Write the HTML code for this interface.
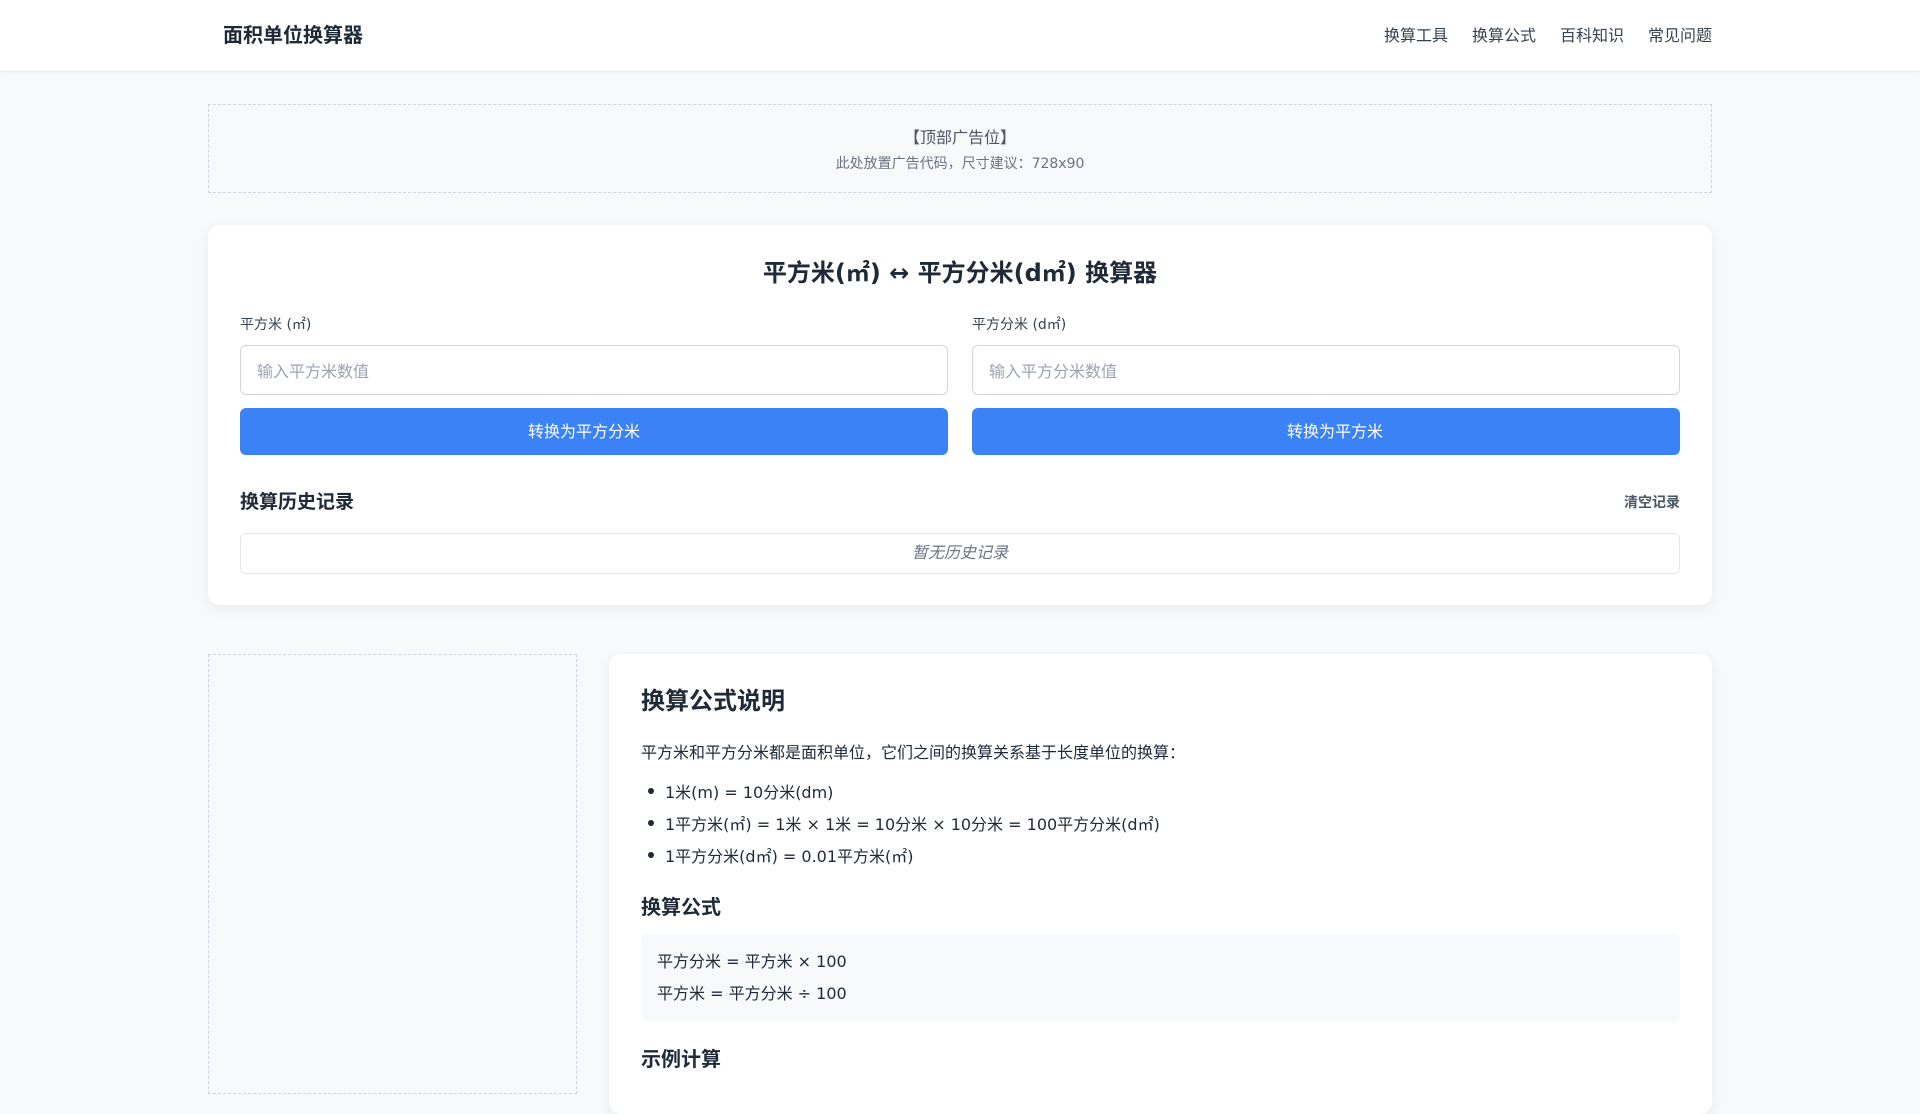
<!DOCTYPE html>
<html><head><meta charset="utf-8"><style>
*{box-sizing:border-box;margin:0;padding:0}
body{width:1920px;height:1080px;overflow:hidden;background:#f8f9fb;font-family:"DejaVu Sans","Noto Sans CJK SC",sans-serif;color:#1f2937}
header{height:72px;background:#fff;border-bottom:1px solid #eceef1;box-shadow:0 1px 3px rgba(0,0,0,.04);position:relative}
.logo{position:absolute;left:223px;top:19px;font-size:20px;font-weight:bold;color:#1f2937}
nav{position:absolute;right:208px;top:22px;font-size:16px;color:#374151}
nav span{margin-left:24px}
.ad{position:absolute;left:208px;top:104px;width:1504px;height:89px;border:1px dashed #cfd5dd;text-align:center;color:#4b5563}
.ad .a{font-size:16px;margin-top:19px}
.ad .b{font-size:14px;margin-top:5px;color:#6b7280}
.card{position:absolute;background:#fff;border-radius:12px;box-shadow:0 4px 14px rgba(0,0,0,.06)}
.c1{left:208px;top:225px;width:1504px;height:380px}
h1{position:absolute;top:28px;left:0;right:0;text-align:center;font-size:24px;font-weight:bold}
.lab{position:absolute;top:89px;font-size:14px;color:#374151}
.inp{position:absolute;top:120px;width:708px;height:50px;border:1px solid #d1d5db;border-radius:6px;padding:12px 16px;font-size:16px;color:#9ca3af}
.btn{position:absolute;top:183px;width:708px;height:47px;background:#3b82f6;border-radius:6px;color:#fff;text-align:center;line-height:47px;font-size:16px}
.hh{position:absolute;left:32px;top:262px;font-size:19px;font-weight:bold}
.clr{position:absolute;right:32px;top:267px;font-size:14px;color:#4b5563;font-weight:bold}
.emp{position:absolute;left:32px;top:308px;width:1440px;height:41px;border:1px solid #e5e7eb;border-radius:6px;text-align:center;line-height:37px;font-style:italic;color:#6b7280;font-size:16px}
.side{position:absolute;left:208px;top:654px;width:369px;height:440px;border:1px dashed #cfd5dd}
.c2{left:609px;top:654px;width:1103px;height:460px;padding:0 32px}
.c2 h2{position:absolute;left:32px;top:27px;font-size:24px;font-weight:bold}
.p{position:absolute;left:32px;font-size:16px;color:#1f2937}
.li{position:absolute;left:56px;font-size:16px}
.li:before{content:"";position:absolute;left:-17px;top:9px;width:6px;height:6px;border-radius:3px;background:#1f2937}
.h3{position:absolute;left:32px;font-size:20px;font-weight:bold}
.box{position:absolute;left:32px;top:280px;width:1039px;height:87px;background:#f8f9fb;border-radius:6px}
</style></head><body>
<header><div class="logo">面积单位换算器</div><nav><span>换算工具</span><span>换算公式</span><span>百科知识</span><span>常见问题</span></nav></header>
<div class="ad"><div class="a">【顶部广告位】</div><div class="b">此处放置广告代码，尺寸建议：728x90</div></div>
<div class="card c1">
<h1>平方米(㎡) ↔ 平方分米(d㎡) 换算器</h1>
<div class="lab" style="left:32px">平方米 (㎡)</div>
<div class="lab" style="left:764px">平方分米 (d㎡)</div>
<div class="inp" style="left:32px">输入平方米数值</div>
<div class="inp" style="left:764px">输入平方分米数值</div>
<div class="btn" style="left:32px;padding-right:20px">转换为平方分米</div>
<div class="btn" style="left:764px;padding-left:18px">转换为平方米</div>
<div class="hh">换算历史记录</div><div class="clr">清空记录</div>
<div class="emp">暂无历史记录</div>
</div>
<div class="side"></div>
<div class="card c2">
<h2>换算公式说明</h2>
<div class="p" style="top:85px">平方米和平方分米都是面积单位，它们之间的换算关系基于长度单位的换算：</div>
<div class="li" style="top:125px">1米(m) = 10分米(dm)</div>
<div class="li" style="top:157px">1平方米(㎡) = 1米 × 1米 = 10分米 × 10分米 = 100平方分米(d㎡)</div>
<div class="li" style="top:189px">1平方分米(d㎡) = 0.01平方米(㎡)</div>
<div class="h3" style="top:237px">换算公式</div>
<div class="box"><div class="p" style="left:16px;top:14px">平方分米 = 平方米 × 100</div><div class="p" style="left:16px;top:46px">平方米 = 平方分米 ÷ 100</div></div>
<div class="h3" style="top:389px">示例计算</div>
</div>
</body></html>
